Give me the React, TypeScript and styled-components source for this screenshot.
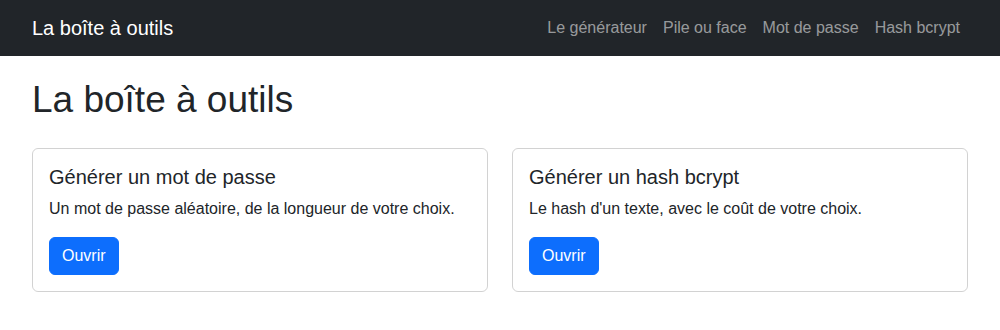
import React from 'react';
import styled, { createGlobalStyle } from 'styled-components';

const GlobalStyle = createGlobalStyle`
  * { box-sizing: border-box; }
  body {
    margin: 0;
    font-family: "Liberation Sans", Arial, sans-serif;
    font-size: 16px;
    line-height: 1.5;
    color: #212529;
    background: #fff;
  }
`;

const Navbar = styled.nav`
  background-color: #212529;
  padding: 8px 0;
`;

const Container = styled.div`
  max-width: 960px;
  margin: 0 auto;
  padding: 0 12px;
`;

const NavInner = styled(Container)`
  display: flex;
  align-items: center;
  justify-content: space-between;
`;

const Brand = styled.a`
  color: #fff;
  font-size: 20px;
  line-height: 30px;
  padding: 5px 0;
  text-decoration: none;
`;

const NavLinks = styled.ul`
  display: flex;
  list-style: none;
  margin: 0;
  padding: 0;
`;

const NavLink = styled.a`
  display: block;
  padding: 8px;
  color: rgba(255, 255, 255, 0.55);
  text-decoration: none;
`;

const Main = styled(Container)`
  padding-top: 22px;
`;

const Title = styled.h1`
  font-size: 37px;
  font-weight: 500;
  line-height: 1.2;
  margin: 0 0 25.6px;
`;

const Grid = styled.div`
  display: grid;
  grid-template-columns: 1fr 1fr;
  gap: 24px;
`;

const Card = styled.div`
  border: 1px solid rgba(0, 0, 0, 0.175);
  border-radius: 6px;
  padding: 16px;
`;

const CardTitle = styled.h5`
  font-size: 20px;
  font-weight: 500;
  line-height: 1.2;
  margin: 0 0 8px;
`;

const CardText = styled.p`
  margin: 0 0 16px;
`;

const Button = styled.a`
  display: inline-block;
  padding: 6px 12px;
  border: 1px solid #0d6efd;
  border-radius: 6px;
  background-color: #0d6efd;
  color: #fff;
  text-decoration: none;
  line-height: 1.5;
`;

const tools = [
  {
    title: 'Générer un mot de passe',
    text: 'Un mot de passe aléatoire, de la longueur de votre choix.',
  },
  {
    title: 'Générer un hash bcrypt',
    text: "Le hash d'un texte, avec le coût de votre choix.",
  },
];

const links = ['Le générateur', 'Pile ou face', 'Mot de passe', 'Hash bcrypt'];

const App: React.FC = () => {
  return (
    <>
      <GlobalStyle />
      <Navbar>
        <NavInner>
          <Brand href="#">La boîte à outils</Brand>
          <NavLinks>
            {links.map((label) => (
              <li key={label}>
                <NavLink href="#">{label}</NavLink>
              </li>
            ))}
          </NavLinks>
        </NavInner>
      </Navbar>
      <Main>
        <Title>La boîte à outils</Title>
        <Grid>
          {tools.map((tool) => (
            <Card key={tool.title}>
              <CardTitle>{tool.title}</CardTitle>
              <CardText>{tool.text}</CardText>
              <Button href="#">Ouvrir</Button>
            </Card>
          ))}
        </Grid>
      </Main>
    </>
  );
};

export default App;
